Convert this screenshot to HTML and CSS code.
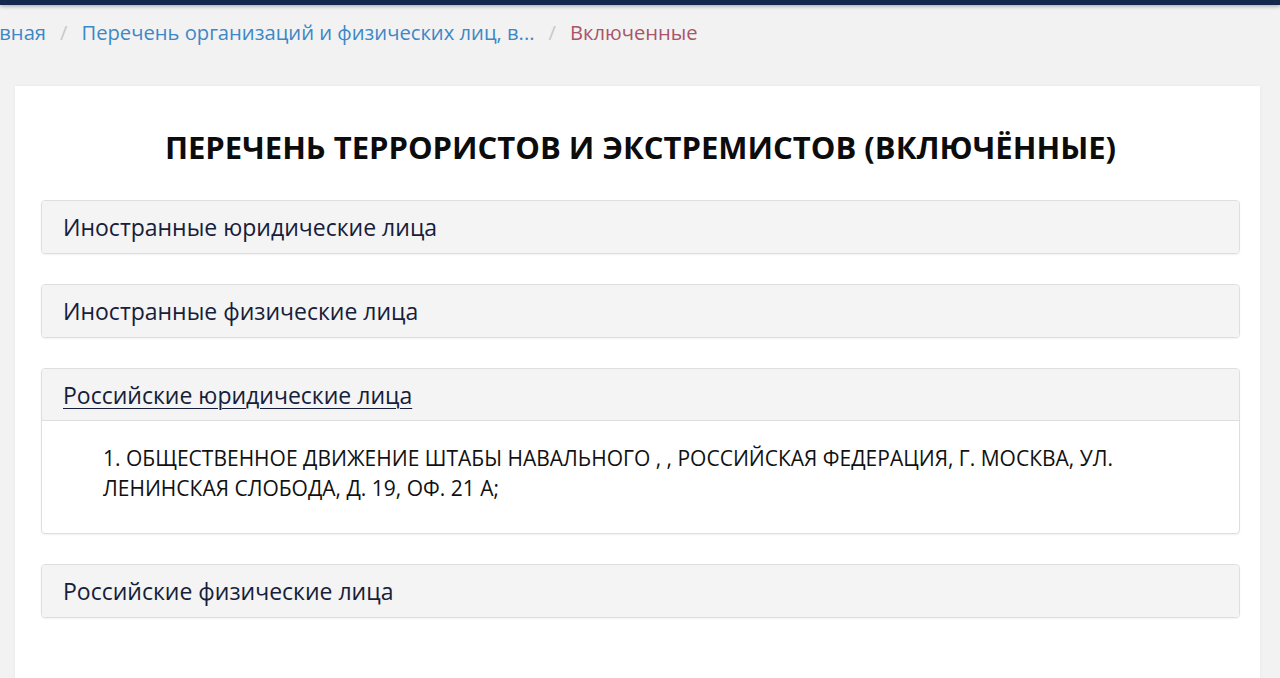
FILE: index.html
```html
<!DOCTYPE html>
<html lang="ru">
<head>
  <meta charset="UTF-8">
  <meta name="viewport" content="width=device-width, initial-scale=1.0">
  <title>Перечень террористов и экстремистов (включённые)</title>
  <link rel="stylesheet" href="styles.css">
</head>
<body>
<div class="topbar"></div>

<ul class="breadcrumb">
  <li><a href="#">Главная</a></li>
  <li><a href="#">Перечень организаций и физических лиц, в...</a></li>
  <li class="active">Включенные</li>
</ul>

<div class="card">
  <h1>Перечень террористов и экстремистов (включённые)</h1>

  <div class="panel">
    <div class="panel-heading"><a href="#">Иностранные юридические лица</a></div>
  </div>

  <div class="panel">
    <div class="panel-heading"><a href="#">Иностранные физические лица</a></div>
  </div>

  <div class="panel open">
    <div class="panel-heading"><a href="#">Российские юридические лица</a></div>
    <div class="panel-body">
      <ol class="terror-list">
        <li>ОБЩЕСТВЕННОЕ ДВИЖЕНИЕ ШТАБЫ НАВАЛЬНОГО , , РОССИЙСКАЯ ФЕДЕРАЦИЯ, Г. МОСКВА, УЛ. ЛЕНИНСКАЯ СЛОБОДА, Д. 19, ОФ. 21 А;</li>
      </ol>
    </div>
  </div>

  <div class="panel">
    <div class="panel-heading"><a href="#">Российские физические лица</a></div>
  </div>
</div>
</body>
</html>
```

FILE: styles.css
```css
html, body {
  margin: 0;
  padding: 0;
}

body {
  background-color: #f2f2f2;
  font-family: "Open Sans", "Noto Sans", sans-serif;
  color: #111;
  overflow: hidden;
}

.topbar {
  height: 5px;
  background-color: #13284a;
  box-shadow: 0 1px 4px rgba(0, 0, 0, 0.35);
}

.breadcrumb {
  list-style: none;
  display: flex;
  margin: 0;
  padding: 15px 0 0 0;
  margin-left: -34px;
  height: 59px;
  box-sizing: border-box;
  font-size: 20.2px;
  line-height: 24px;
  white-space: nowrap;
}

.breadcrumb li + li::before {
  content: "/";
  color: #c8c8c8;
  padding: 0 14px;
}

.breadcrumb a {
  color: #3d88c6;
  text-decoration: none;
}

.breadcrumb .active {
  color: #a9546a;
}

.card {
  background-color: #fff;
  margin: 22px 20px 0 15px;
  padding: 36px 20px 60px 26px;
  min-height: 560px;
  box-shadow: 0 0 3px rgba(0, 0, 0, 0.06);
}

h1 {
  margin: 0 0 28px 0;
  text-align: center;
  text-transform: uppercase;
  font-size: 31px;
  line-height: 50px;
  font-weight: 700;
  color: #0c0c0c;
}

.panel {
  border: 1px solid #dedede;
  border-radius: 4px;
  margin-bottom: 30px;
  box-shadow: 0 1px 2px rgba(0, 0, 0, 0.06);
}

.panel-heading {
  background-color: #f4f4f4;
  padding: 0 21px;
  height: 52px;
  display: flex;
  align-items: center;
  font-size: 23px;
  border-radius: 4px;
}

.panel-heading a {
  color: #16203a;
  text-decoration: none;
}

.panel.open .panel-heading {
  height: 51px;
  border-bottom: 1px solid #dedede;
  border-radius: 4px 4px 0 0;
}

.panel.open .panel-heading a {
  text-decoration: underline;
  text-underline-offset: 4px;
  text-decoration-thickness: 1px;
}

.panel-body {
  padding: 22px 20px 30px 20px;
}

.terror-list {
  margin: 0;
  padding-left: 41px;
  list-style-position: inside;
  font-size: 21px;
  line-height: 30px;
  color: #111;
}
```
